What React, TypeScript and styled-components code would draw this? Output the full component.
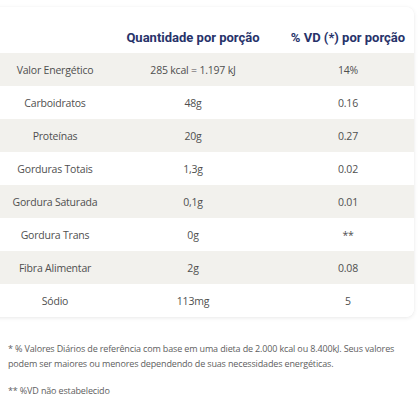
import React from "react";
import styled, { createGlobalStyle } from "styled-components";

const Global = createGlobalStyle`
  html, body { margin: 0; padding: 0; background: #ffffff; }
  body { font-family: "Open Sans", "Liberation Sans", sans-serif; }
`;

const Page = styled.div`
  width: 420px;
  height: 420px;
  overflow: hidden;
  background: #fff;
  padding-top: 7px;
  box-sizing: border-box;
`;

const Card = styled.div`
  margin: 0 6px 0 -8px;
  background: #fff;
  border-radius: 8px;
  box-shadow: 0 1px 4px rgba(0, 0, 0, 0.09), 0 0 1px rgba(0, 0, 0, 0.06);
  overflow: hidden;
`;

const Row = styled.div<{ $shaded?: boolean; $head?: boolean }>`
  display: grid;
  grid-template-columns: 126px 150px 1fr;
  align-items: center;
  height: ${(p) => (p.$head ? "46px" : "33px")};
  background: ${(p) => (p.$shaded ? "#f2f1ed" : "#fff")};
  ${(p) => (p.$head ? "padding-top: 14px; box-sizing: border-box;" : "")}
`;

const Cell = styled.div<{ $col: number }>`
  display: flex;
  justify-content: center;
  font-size: 10.5px;
  letter-spacing: -0.2px;
  color: #4f4f4f;
  white-space: nowrap;
  padding-left: ${(p) => (p.$col === 2 ? "14px" : "0")};
`;

const HeadCell = styled.div<{ $col: number }>`
  display: flex;
  justify-content: center;
  font-family: Roboto, "Liberation Sans", sans-serif;
  font-weight: 700;
  font-size: 13px;
  color: #27336a;
  white-space: nowrap;
  padding-left: ${(p) => (p.$col === 2 ? "14px" : "0")};
`;

const Notes = styled.div`
  padding: 24px 8px 0 8px;
  font-size: 9px;
  letter-spacing: -0.15px;
  line-height: 15px;
  color: #5e5e5e;
`;

const Note = styled.p`
  margin: 0 0 12px 0;
`;

const rows: [string, string, string][] = [
  ["Valor Energético", "285 kcal = 1.197 kJ", "14%"],
  ["Carboidratos", "48g", "0.16"],
  ["Proteínas", "20g", "0.27"],
  ["Gorduras Totais", "1,3g", "0.02"],
  ["Gordura Saturada", "0,1g", "0.01"],
  ["Gordura Trans", "0g", "**"],
  ["Fibra Alimentar", "2g", "0.08"],
  ["Sódio", "113mg", "5"],
];

export default function App() {
  return (
    <Page>
      <Global />
      <Card>
        <Row $head>
          <HeadCell $col={0}></HeadCell>
          <HeadCell $col={1}>Quantidade por porção</HeadCell>
          <HeadCell $col={2}>% VD (*) por porção</HeadCell>
        </Row>
        {rows.map((r, i) => (
          <Row key={r[0]} $shaded={i % 2 === 0}>
            {r.map((c, j) => (
              <Cell key={j} $col={j}>
                {c}
              </Cell>
            ))}
          </Row>
        ))}
      </Card>
      <Notes>
        <Note>
          * % Valores Diários de referência com base em uma dieta de 2.000 kcal ou 8.400kJ. Seus valores
          podem ser maiores ou menores dependendo de suas necessidades energéticas.
        </Note>
        <Note>** %VD não estabelecido</Note>
      </Notes>
    </Page>
  );
}
